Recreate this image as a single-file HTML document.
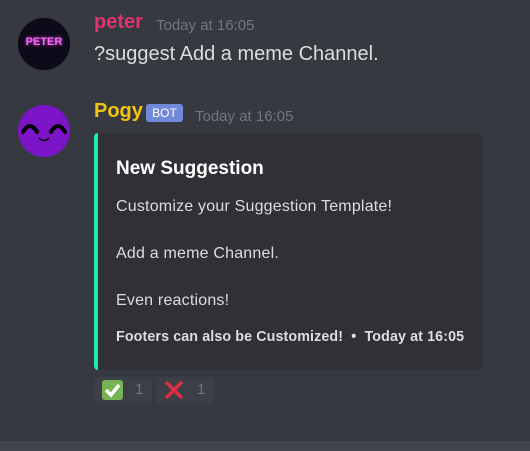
<!DOCTYPE html>
<html><head><style>
body{margin:0;width:530px;height:451px;background:#36393f;font-family:"Liberation Sans",sans-serif;position:relative;overflow:hidden;color:#dcddde}
.a{position:absolute;white-space:nowrap}
</style></head><body>
<div class="a" style="left:18px;top:18px;width:52px;height:52px;border-radius:50%;background:#0d0a1a;overflow:hidden">
<div class="a" style="left:2px;top:18px;width:48px;text-align:center;font:bold 11px 'Liberation Sans';color:#f06cf0;text-shadow:0 0 3px #e040e0">PETER</div></div>
<div class="a" style="left:94px;top:11px;font-size:20px;color:#e0336b;font-weight:bold">peter</div>
<div class="a" style="left:156px;top:17px;font-size:15px;color:#72767d">Today at 16:05</div>
<div class="a" style="left:94px;top:43px;font-size:20px;color:#dcddde">?suggest Add a meme Channel.</div>

<div class="a" style="left:18px;top:105px;width:52px;height:52px;border-radius:50%;background:#7c14c8;overflow:hidden">
<svg width="52" height="52" class="a" style="left:0;top:0"><path d="M5 27 Q12 15 19 27 M33 27 Q40 15 47 27" stroke="#000" stroke-width="4" fill="none" stroke-linecap="round"/><path d="M21 33 Q26 38 31 33" stroke="#000" stroke-width="1.5" fill="none"/></svg></div>
<div class="a" style="left:94px;top:100px;font-size:20px;color:#f1c40f;font-weight:bold">Pogy</div>
<div class="a" style="left:146px;top:104px;width:37px;height:18px;border-radius:3px;background:#7289da;color:#fff;font-size:12px;line-height:18px;text-align:center">BOT</div>
<div class="a" style="left:195px;top:108px;font-size:15px;color:#72767d">Today at 16:05</div>

<div class="a" style="left:94px;top:133px;width:388px;height:237px;background:#2f3136;border-radius:4px;border-left:4px solid #1ceeb0;box-sizing:border-box"></div>
<div class="a" style="left:116px;top:158px;font-size:19px;font-weight:bold;color:#fff">New Suggestion</div>
<div class="a" style="left:116px;top:198px;font-size:16px;letter-spacing:0.2px">Customize your Suggestion Template!</div>
<div class="a" style="left:116px;top:245px;font-size:16px;letter-spacing:0.2px">Add a meme Channel.</div>
<div class="a" style="left:116px;top:292px;font-size:16px;letter-spacing:0.2px">Even reactions!</div>
<div class="a" style="left:116px;top:329px;font-size:14.3px;font-weight:bold;color:#dcddde;letter-spacing:0.1px">Footers can also be Customized! &nbsp;•&nbsp; Today at 16:05</div>

<div class="a" style="left:94px;top:377px;width:58px;height:26px;border-radius:4px;background:#3c3f45"></div>
<div class="a" style="left:102px;top:380px;width:21px;height:20px;border-radius:3px;background:#77b255"><svg width="21" height="20"><path d="M4 10 L9 15 L17 5" stroke="#fff" stroke-width="3.5" fill="none"/></svg></div>
<div class="a" style="left:135px;top:381px;font-size:15px;color:#72767d">1</div>
<div class="a" style="left:156px;top:377px;width:58px;height:26px;border-radius:4px;background:#3c3f45"></div>
<svg class="a" style="left:163px;top:380px" width="22" height="20"><path d="M3 2 L19 18 M19 2 L3 18" stroke="#dd2e44" stroke-width="3.5"/></svg>
<div class="a" style="left:197px;top:381px;font-size:15px;color:#72767d">1</div>

<div class="a" style="left:0;top:441px;width:530px;height:10px;background:#40444b"></div>
</body></html>
